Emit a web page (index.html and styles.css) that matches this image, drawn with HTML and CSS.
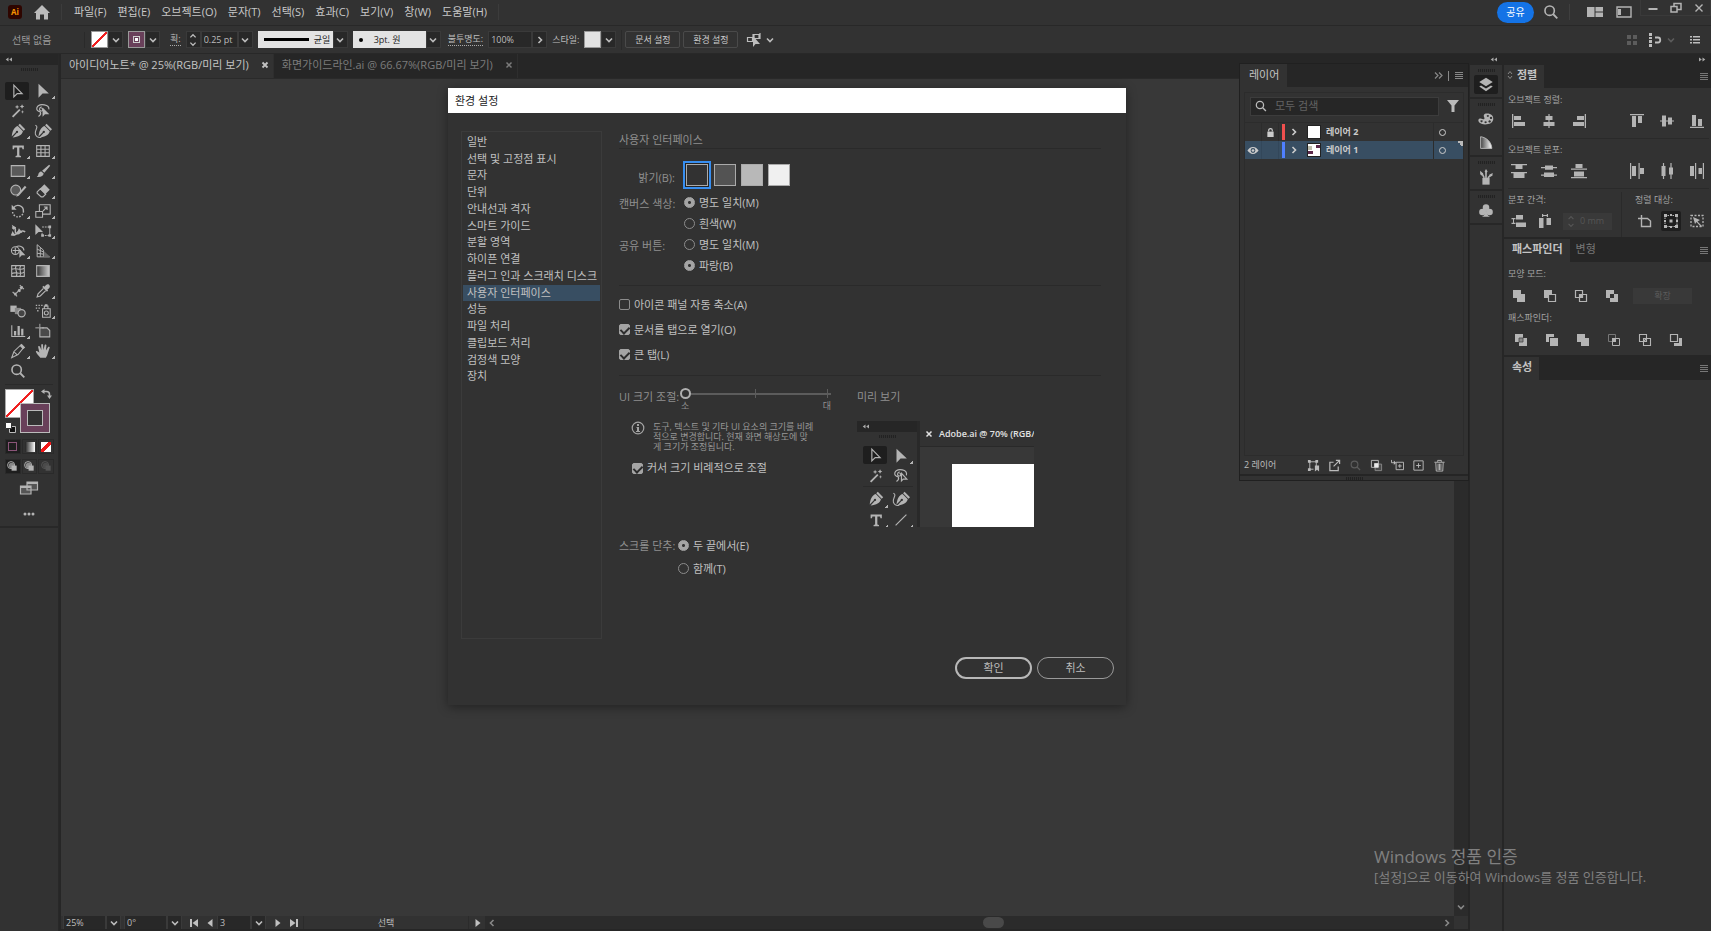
FILE: index.html
```html
<!DOCTYPE html>
<html lang="ko">
<head>
<meta charset="utf-8">
<title>환경 설정</title>
<link rel="stylesheet" href="styles.css">
</head>
<body>
<svg class="sprite" aria-hidden="true">
  <defs>
    <linearGradient id="g1"><stop offset="0" stop-color="#333"/><stop offset="1" stop-color="#ccc"/></linearGradient>
    <linearGradient id="g2"><stop offset="0" stop-color="#222"/><stop offset="1" stop-color="#fff"/></linearGradient>
    <linearGradient id="g3"><stop offset="0" stop-color="#444"/><stop offset="1" stop-color="#fff"/></linearGradient>
  </defs>
  <symbol id="chev" viewBox="0 0 10 10"><path class="ln" stroke-width="1.6" d="M2 3.5l3 3 3-3"/></symbol>
  <symbol id="chevr" viewBox="0 0 10 10"><path class="ln" stroke-width="1.6" d="M3.5 2l3 3-3 3"/></symbol>
  <symbol id="spin" viewBox="0 0 10 16"><path class="ln" stroke-width="1.5" d="M2 5l3-3 3 3M2 11l3 3 3-3"/></symbol>
  <symbol id="home" viewBox="0 0 18 18"><path d="M9 2l8 8h-2v6.500h-4V11.500H7v5H3V10H1z"/></symbol>
  <symbol id="search" viewBox="0 0 20 20"><circle class="ln" cx="8.500" cy="8.500" r="5.200" stroke-width="1.800"/><path class="ln" stroke-width="2" d="M12.500 12.500l4.500 4.500"/></symbol>
  <symbol id="ham" viewBox="0 0 10 10"><path class="ln" d="M1 1.500h8M1 3.500h8M1 5.500h8M1 7.500h8"/></symbol>
  <symbol id="dl" viewBox="0 0 10 6"><path d="M5 0v6L1 3zM10 0v6L6 3z"/></symbol>
  <symbol id="dr" viewBox="0 0 10 6"><path d="M0 0v6l4-3zM5 0v6l4-3z"/></symbol>
  <symbol id="arrow-o" viewBox="0 0 20 20"><path class="ln" stroke-width="1.300" d="M6.500 3.500v13l3.700-3.500h5.500z"/></symbol>
  <symbol id="arrow-f" viewBox="0 0 20 20"><path d="M5 2v15.500l4.500-4.700h7z"/></symbol>
  <symbol id="wand" viewBox="0 0 20 20"><path class="ln" stroke-width="2" d="M4 16.500l8-8"/><path d="M9 3l.7 1.800L11.500 5.500l-1.800.7L9 8l-.7-1.800L6.500 5.500l1.800-.7zM14.500 2.500l.8 1.700 1.700.8-1.700.8-.8 1.700-.8-1.700L12 5l1.700-.8zM15 9l.5 1.500 1.500.5-1.500.5L15 13l-.5-1.500L13 11l1.500-.5z"/></symbol>
  <symbol id="lasso" viewBox="0 0 20 20"><path class="ln" stroke-width="1.300" d="M7 11c-3-.5-4.500-2.500-3.800-4.600C4.200 3.500 8 2.600 11.500 3.200c3.500.6 5.300 2.800 5 5M8.500 5.500C5.500 6 5.500 10 8 10s2-3 .3-3M7 11c1 2-.5 4-2 5"/><path d="M9.500 6v10.500l2.700-2.800H17z"/></symbol>
  <symbol id="lasso-o" viewBox="0 0 20 20"><path class="ln" stroke-width="1.300" d="M7 11c-3-.5-4.500-2.500-3.800-4.600C4.200 3.500 8 2.600 11.500 3.200c3.500.6 5.300 2.800 4.500 6M8.500 5.500C5.500 6 5.500 10 8 10s2-3 .3-3M7 11c1 2-.5 4-2 5M10.500 7v8.500l2-2h4z"/></symbol>
  <symbol id="pen" viewBox="0 0 20 20"><path d="M12 2l6 6-1.700 1.700-6-6zM9.700 4.500l5.800 5.800c-1 4.200-5 6-11.500 7l4.600-5a1.300 1.300 0 1 0-1-1L3 16C3.800 10 5.500 6 9.700 4.500z"/></symbol>
  <symbol id="curve" viewBox="0 0 20 20"><g transform="translate(2 0)"><path d="M12 2l6 6-1.700 1.700-6-6zM9.700 4.500l5.800 5.800c-1 4.200-5 6-11.500 7l4.600-5a1.300 1.300 0 1 0-1-1L3 16C3.800 10 5.500 6 9.700 4.500z"/></g><path class="ln" stroke-width="1.200" d="M1.500 3.500C6 5 0 10 1.500 13.500 2.500 16.500 5 17.500 8 17"/></symbol>
  <symbol id="type" viewBox="0 0 20 20"><path d="M4 4h12.500v4H15l-.5-2h-3v9l1.800.5V17h-6v-1.500L9 15V6H6l-.5 2H4z"/></symbol>
  <symbol id="gridt" viewBox="0 0 20 20"><path class="ln" stroke-width="1.200" d="M3 4h14v12H3zM3 8h14M3 12h14M7.700 4v12M12.300 4v12"/></symbol>
  <symbol id="rect" viewBox="0 0 20 20"><path fill="#5a5a5a" stroke="currentColor" stroke-width="1.200" d="M2.500 4h15v12h-15z"/></symbol>
  <symbol id="brush" viewBox="0 0 20 20"><path d="M16.800 3L18 4.200 11.500 12 9 9.700zM8.200 10.500l2.500 2.300C10.500 15.500 7 17.500 3 16.500c2-1 1.500-2.500 2.200-4 .7-1.300 2-2 3-2z"/></symbol>
  <symbol id="shaper" viewBox="0 0 20 20"><circle cx="7.500" cy="9" r="5.500" fill="#5a5a5a" stroke="currentColor" stroke-width="1.200"/><path class="ln" stroke-width="2.300" d="M18.500 5l-8 9"/><path d="M9.500 13l2 2-3.500 1.500z"/></symbol>
  <symbol id="eraser" viewBox="0 0 20 20"><path d="M11.500 2.500l6 6-5 5-6-6z"/><path class="ln" stroke-width="1.300" d="M7 7.500l6 6-3 3H8L3.500 12.500V11z"/></symbol>
  <symbol id="rotate" viewBox="0 0 20 20"><path class="ln" stroke-width="1.600" d="M5 6.500A6 6 0 0 1 16 10"/><path class="ln" stroke-width="1.600" stroke-dasharray="1.800 1.500" d="M16 10a6 6 0 0 1-12 1"/><path d="M3 3v5.500h5.500z"/></symbol>
  <symbol id="scale" viewBox="0 0 20 20"><path class="ln" stroke-width="1.200" d="M2 10.500h7.500v6.500H2zM6 10V3h12v10.500H10M10 10l4.500-4.500M11 5.500h3.500V9"/></symbol>
  <symbol id="width" viewBox="0 0 20 20"><path class="ln" stroke-width="1.700" d="M3.500 7c3-2 4 0 3.500 3s3 4 5 2 3-3 6-1M3 14c3 1 6-1 8-4"/><path d="M3 3l5 3-3 3zM11 7l4 5h-6zM4 10l3 5H2z"/></symbol>
  <symbol id="free" viewBox="0 0 20 20"><path d="M1.500 2.500v12l3.500-3.500h5z"/><path class="ln" stroke-width="1.200" stroke-dasharray="2 1" d="M9 5.500h9M9 15h9"/><path class="ln" d="M9 12v3M17.500 5v10"/><path d="M16 4h3v3h-3zM16 13.500h3v3h-3zM8 13.500h3v3H8z"/></symbol>
  <symbol id="builder" viewBox="0 0 20 20"><circle class="ln" cx="7" cy="9.500" r="4.300" stroke-width="1.200"/><path class="ln" stroke-width="1.200" d="M8 5.300a5.500 4.500 0 0 1 8.500 4.200M4 9.500h9M7 6v7"/><path d="M11.500 7.500v10l2.700-2.700h4z"/></symbol>
  <symbol id="persp" viewBox="0 0 20 20"><path class="ln" stroke-width="1.100" d="M3.500 3v13.500h14M3.500 3l7 6v7M3.500 8l7 3M3.500 12.500l7 1M7 6v10.500"/><path fill="#666" d="M11 10l7 6.500h-7z"/></symbol>
  <symbol id="mesh" viewBox="0 0 20 20"><path class="ln" stroke-width="1.200" d="M3 4h14v12H3zM3 8c5-2 9 2 14-1M3 13c4-3 10 2 14-2M8 4c-3 4 3 8 0 12M13 4c-3 4 2 8-1 12"/></symbol>
  <symbol id="grad" viewBox="0 0 20 20"><path fill="url(#g1)" stroke="currentColor" stroke-width="1.200" d="M3 4h14v12H3z"/></symbol>
  <symbol id="measure" viewBox="0 0 20 20"><path class="ln" stroke-width="1.300" d="M4 11l5 5M12 3.500l4.500 4.500M7 13.500L14.500 6"/><path d="M5.500 15l1-4 2.500 2.800zM15.500 4.500l-1 4-3-2.800zM11 7.500l2.500 2.500-2 1.500-2-2z"/></symbol>
  <symbol id="drop" viewBox="0 0 20 20"><path d="M13.500 3.300c2.300-2 5.500.7 3.500 3.300L14.800 8.500l.9.900-1.300 1.300-5.200-5.100 1.300-1.300.9.900z"/><path class="ln" stroke-width="1.300" d="M10.500 7l-6 6.200L3.500 16.500l3.500-1 6-6"/></symbol>
  <symbol id="blend" viewBox="0 0 20 20"><path d="M1.500 4h7v7h-7z"/><path fill="#888" d="M6.500 6.500h7v7h-7z"/><circle cx="14" cy="12.500" r="4" fill="#444" stroke="currentColor" stroke-width="1.300"/></symbol>
  <symbol id="spray" viewBox="0 0 20 20"><path class="ln" stroke-width="1.200" d="M9.500 7.500h8.500v9.500H9.500zM11.500 7V4.500h4V7"/><circle class="ln" cx="13.700" cy="12.200" r="2.200" stroke-width="1.200"/><path d="M2 3h1.500v1.500H2zM5 3h1.500v1.500H5zM8 3h1.500v1.500H8zM2 6h1.500v1.500H2zM5 6h1.500v1.500H5zM3.500 9H5v1.500H3.500zM12 2.500h3V5h-3z"/></symbol>
  <symbol id="graph" viewBox="0 0 20 20"><path d="M2.500 3.500h1.200V15.500H18v1.200H2.500zM5.500 10h2.500v5H5.500zM9.500 4.500h2.500v10.500H9.500zM13.500 7.500H16V15h-2.500z"/></symbol>
  <symbol id="artb" viewBox="0 0 20 20"><path fill="#4a4a4a" stroke="currentColor" stroke-width="1.200" d="M6.500 6.500h8l3 3v7h-11z"/><path class="ln" d="M1.500 6.500h4.500M6.500 2v4M9 6.500h2"/></symbol>
  <symbol id="slice" viewBox="0 0 20 20"><path class="ln" stroke-width="1.200" d="M3 17.500l2.500-7L13.500 3l3 3-6.500 8zM5.500 11l4 3.500"/><path d="M12 4.500L14 2l4 4-2.500 2z"/></symbol>
  <symbol id="hand" viewBox="0 0 20 20"><path d="M7 17.500c-1.500-2-4.500-5-5-7 1-1 2.500 0 4 1.500L4.500 5c.6-1 1.900-.6 2.200.3L8.200 9 8 3c.4-1 1.700-1 2 0L10.500 9l1.400-5.700c.5-.8 1.900-.5 1.900.6L13.300 9.500l2.400-4c.8-.6 2 0 1.700 1L15.500 12c-.5 2-1.200 4-2.300 5.500z"/></symbol>
  <symbol id="swap" viewBox="0 0 12 12"><path class="ln" stroke-width="1.500" d="M3 3.500h2.500c2 0 3 1 3 3V8"/><path d="M0 3.500L3.500 1v5zM6 7.500h5L8.500 11z"/></symbol>
  <symbol id="screen" viewBox="0 0 20 16"><path fill="#555" stroke="currentColor" stroke-width="1.200" d="M8 2h10.500v8H8zM1.500 6H12v8H1.500z"/><path d="M8 2h10.500v2H8zM1.500 6H12v2H1.500z"/></symbol>
  <symbol id="dm" viewBox="0 0 14 14"><circle class="ln" cx="5.500" cy="5.500" r="3.800"/><path d="M6 6h5.500v5.500H6z"/><circle cx="6" cy="6" r="3" opacity=".7"/></symbol>
  <symbol id="layers" viewBox="0 0 20 20"><path d="M10 2l7.500 4.800L10 11.500 2.500 6.800zM4.500 10.500L10 14l5.500-3.500 2 1.300L10 17l-7.500-5.200z"/></symbol>
  <symbol id="palette" viewBox="0 0 20 20"><path fill-rule="evenodd" d="M11 4c5 0 7.500 3 7 6.500S14 16 9 16s-7.500-2-7.500-4.500 3-2.500 4.500-1.500 3 0 2-2S7.500 4 11 4zm1 1.500a1.300 1 0 1 0 .1 0zM15.500 7.500a1.300 1.200 0 1 0 .1 0zM14 11.500a1.400 1.200 0 1 0 .1 0zM9.500 12.500a1.400 1 0 1 0 .1 0zM5 11.500a1.200 1 0 1 0 .1 0z"/></symbol>
  <symbol id="cguide" viewBox="0 0 20 20"><path fill="url(#g3)" stroke="#bbb" d="M4 3c7 1 12 6 12.500 13H4z"/></symbol>
  <symbol id="brushes" viewBox="0 0 20 20"><path d="M6 11h8v7.500H6z"/><path class="ln" stroke-width="1.800" d="M8 11L5.500 6M10 11V5M12 11l3.500-3"/><path d="M3.500 3l3.500 3-1.500 2.500L3.500 7zM10 1l1.800 3-1.800 2.500L8.500 4zM17.500 5.500L17 9l-3 .5-.5-2z"/></symbol>
  <symbol id="club" viewBox="0 0 20 20"><circle cx="10" cy="6" r="3.600"/><circle cx="6" cy="11" r="3.600"/><circle cx="14" cy="11" r="3.600"/><path d="M9 9h2c0 4 .5 6 3.500 7.500h-9C8.500 15 9 13 9 9z"/></symbol>
  <symbol id="eye" viewBox="0 0 14 10"><path fill-rule="evenodd" d="M7 1c3 0 5 2 6.500 4C12 7 10 9 7 9S2 7 .5 5C2 3 4 1 7 1zm0 1.200A2.800 2.800 0 1 0 7 7.800 2.800 2.800 0 0 0 7 2.200z"/><circle cx="7" cy="5" r="1.600"/></symbol>
  <symbol id="lock" viewBox="0 0 10 12"><path d="M1.500 5h7v6h-7z"/><path class="ln" stroke-width="1.300" d="M3 5V3.500c0-2.500 4-2.500 4 0V5"/></symbol>
  <symbol id="filter" viewBox="0 0 12 12"><path d="M0 0h12L7.500 5.500V12h-3V5.500z"/></symbol>
  <!-- align -->
  <symbol id="al1" viewBox="0 0 16 16"><path d="M1 1h1.300v14H1zM3 3h7v4H3zM3 9h11v4H3z"/></symbol>
  <symbol id="al2" viewBox="0 0 16 16"><path d="M7.400 1h1.200v14H7.400zM4.500 3h7v4h-7zM2.500 9h11v4h-11z"/></symbol>
  <symbol id="al3" viewBox="0 0 16 16"><path d="M13.700 1H15v14h-1.300zM6 3h7v4H6zM2 9h11v4H2z"/></symbol>
  <symbol id="al4" viewBox="0 0 16 16"><path d="M1 1h14v1.300H1zM3 3h4v11H3zM9 3h4v7H9z"/></symbol>
  <symbol id="al5" viewBox="0 0 16 16"><path d="M1 7.400h14v1.200H1zM3 2.500h4v11H3zM9 4.500h4v7H9z"/></symbol>
  <symbol id="al6" viewBox="0 0 16 16"><path d="M1 13.700h14V15H1zM3 2h4v11H3zM9 6h4v7H9z"/></symbol>
  <symbol id="ds1" viewBox="0 0 16 16"><path d="M0 1h16v1.200H0zM4.500 2h7v4h-7zM0 9h16v1.200H0zM2.500 10h11v5h-11z"/></symbol>
  <symbol id="ds2" viewBox="0 0 16 16"><path d="M0 4h16v1.200H0zM4 2.500h8v4.200H4zM0 11.500h16v1.200H0zM3 9.500h10v4.500H3z"/></symbol>
  <symbol id="ds3" viewBox="0 0 16 16"><path d="M0 5.500h16v1.200H0zM4.500 1h7v4h-7zM3 8.500h10v5H3zM0 14h16v1.200H0z"/></symbol>
  <symbol id="ds4" viewBox="0 0 16 16"><path d="M1 0h1.200v16H1zM3 3h4v10H3zM9.500 0h1.200v16H9.500zM11 5h4v6h-4z"/></symbol>
  <symbol id="ds5" viewBox="0 0 16 16"><path d="M3.900 0h1.200v16H3.900zM2.500 3h4v10h-4zM11.400 0h1.200v16h-1.200zM10 4.500h4v7h-4z"/></symbol>
  <symbol id="ds6" viewBox="0 0 16 16"><path d="M1 3h4v10H1zM6 0h1.200v16H6zM9.500 5h3.500v6H9.500zM13.800 0H15v16h-1.200z"/></symbol>
  <symbol id="sp1" viewBox="0 0 16 16"><path d="M5 2h7v4.500H5zM5 9.500h10V14H5zM.5 5h4v1.200h-4zM.5 9.800h4V11h-4zM2 6h1v4H2z"/></symbol>
  <symbol id="sp2" viewBox="0 0 16 16"><path d="M2 5h4.500v10H2zM9.500 5H14v7H9.500zM5 1h1.200v3H5zM9.800 1H11v3H9.800zM6 2h4v1H6z"/></symbol>
  <symbol id="at1" viewBox="0 0 16 16"><path class="ln" stroke-width="1.400" d="M4.500 5.500h6L13.500 8v5.500h-9zM1 5.500h3M4.500 2v3"/></symbol>
  <symbol id="at2" viewBox="0 0 16 16"><path class="ln" stroke-width="1.100" stroke-dasharray="1.500 1" d="M2 2.500h12v11H2z"/><path d="M1 1h3v3H1zM12 1h3v3h-3zM1 12h3v3H1zM12 12h3v3h-3zM6.500 6.500h3v3h-3zM7 1h2v2H7zM7 13h2v2H7zM1 7h2v2H1zM13 7h2v2h-2z"/></symbol>
  <symbol id="at3" viewBox="0 0 16 16"><path class="ln" stroke-width="1.300" stroke-dasharray="2 1.500" d="M2 2.500h12v11H2z"/><path d="M4 4l7 3-2.500 1.500L13 13l-1 1-4.500-5L6 11z"/></symbol>
  <!-- pathfinder -->
  <symbol id="pf1" viewBox="0 0 14 14"><path d="M1 1h8v4h4v8H5V9H1z"/></symbol>
  <symbol id="pf2" viewBox="0 0 14 14"><path d="M1 1h8v4H5v4H1z"/><path class="ln" stroke-width="1.200" d="M5.500 5.500h7v7h-7z"/></symbol>
  <symbol id="pf3" viewBox="0 0 14 14"><path class="ln" stroke-width="1.200" d="M1.500 1.500h7v7h-7zM5.500 5.500h7v7h-7z"/><path d="M5 5h4v4H5z"/></symbol>
  <symbol id="pf4" viewBox="0 0 14 14"><path fill-rule="evenodd" d="M1 1h8v4h4v8H5V9H1zM5 5v4h4V5z"/></symbol>
  <symbol id="pf5" viewBox="0 0 14 14"><path d="M1 1h8v8H1z"/><path d="M5 5h8v8H5z"/><path fill="#888" stroke="#444" stroke-width=".8" d="M5 5h4v4H5z"/></symbol>
  <symbol id="pf6" viewBox="0 0 14 14"><path d="M1 1h8v3H4v5H1z"/><path d="M5 5h8v8H5z"/></symbol>
  <symbol id="pf7" viewBox="0 0 14 14"><path fill="none" stroke="#777" d="M1.500 1.500h7v7h-7z"/><path class="ln" d="M9 5.500h3.500v7h-7V9"/><path d="M5 5h4v4H5z"/></symbol>
  <symbol id="pf8" viewBox="0 0 14 14"><path class="ln" stroke-width="1.100" d="M1.500 1.500h7v7h-7zM5.500 5.500h7v7h-7zM5.500 8.500l3-3"/></symbol>
  <symbol id="pf9" viewBox="0 0 14 14"><path d="M10 5h3v8H5v-3h5z"/><path class="ln" stroke-width="1.200" d="M1.500 1.500h7v7h-7z"/></symbol>
  <!-- layer footer -->
  <symbol id="lf1" viewBox="0 0 14 14"><path class="ln" d="M3 3h7v5M3 3v8h4"/><path d="M1 1h3v3H1zM9 1h3v3H9zM1 10h3v3H1zM8.500 7H13v6.500l-2.200-2-2.300 2z"/></symbol>
  <symbol id="lf2" viewBox="0 0 14 14"><path class="ln" stroke-width="1.300" d="M6 3.500H2v9h9V8M6 8l6-6M8.500 1.500h4v4"/></symbol>
  <symbol id="lf4" viewBox="0 0 14 14"><path fill="#4a4a4a" stroke="#888" d="M5.500 5.500h7v7h-7z"/><path class="ln" d="M1.500 1.500h7.500v7.500H1.500z"/><path fill="#e8e8e8" d="M4.500 4.500H9V9H4.500z"/></symbol>
  <symbol id="lf5" viewBox="0 0 14 14"><path class="ln" d="M5.500 3.500h8v8h-8zM9.500 5.500v4M7.500 7.500h4M.5 1v3h3"/><path d="M3 1.500v5L5.500 4z"/></symbol>
  <symbol id="lf6" viewBox="0 0 14 14"><path class="ln" d="M2 2h10v10H2zM7 4.500v5M4.500 7h5"/></symbol>
  <symbol id="lf7" viewBox="0 0 14 14"><path class="ln" d="M1.500 3.500h11M5 3V1.500h4V3M3 4l.5 9h7l.5-9M5.500 5v7M7 5v7M8.500 5v7"/></symbol>
</svg>

<div class="app">
  <header class="menubar">
    <span class="logo">Ai</span>
    <button class="plain home" aria-label="홈"><svg class="i18"><use href="#home"/></svg></button>
    <nav class="menus">
      <button class="plain">파일(F)</button><button class="plain">편집(E)</button><button class="plain">오브젝트(O)</button><button class="plain">문자(T)</button><button class="plain">선택(S)</button><button class="plain">효과(C)</button><button class="plain">보기(V)</button><button class="plain">창(W)</button><button class="plain">도움말(H)</button>
    </nav>
    <div class="menu-right">
      <button class="share">공유</button>
      <button class="plain find" aria-label="검색"><svg class="i18"><use href="#search"/></svg></button>
      <span class="vsep"></span>
      <button class="plain ws" aria-label="작업 영역"><svg width="16" height="12" viewBox="0 0 16 12"><path d="M0 1h7.500v10H0zM8.500 1H16v4.500H8.500zM8.500 6.500H16V11H8.500z"/></svg></button>
      <button class="plain arrange" aria-label="화면"><svg width="16" height="12" viewBox="0 0 16 12"><path class="ln" stroke-width="1.400" d="M1 1h14v10H1z"/><path d="M2 3h3v6H2z"/></svg></button>
      <div class="winctl">
        <button class="plain" aria-label="최소화"><svg width="12" height="12" viewBox="0 0 12 12"><path d="M1.500 6h9v2h-9z"/></svg></button>
        <button class="plain" aria-label="이전 크기로"><svg width="14" height="12" viewBox="0 0 14 12"><path class="ln" stroke-width="1.500" d="M2 4.500h6v5.500H2zM5 4V1.500h7v6H8.500"/></svg></button>
        <button class="plain" aria-label="닫기"><svg width="12" height="12" viewBox="0 0 12 12"><path class="ln" stroke-width="1.400" d="M2.500 2.500l7 7M9.500 2.500l-7 7"/></svg></button>
      </div>
    </div>
  </header>

  <div class="control">
    <span class="sel-state">선택 없음</span>
    <div class="combo c-fill"><span class="sw none"></span><button aria-label="칠"><svg class="i10"><use href="#chev"/></svg></button></div>
    <div class="combo"><span class="sw plum"><i></i></span><button aria-label="선 색상"><svg class="i10"><use href="#chev"/></svg></button></div>
    <label class="dotted" for="stroke-w">획:</label>
    <div class="combo c-weight"><button class="spinb" aria-label="단계"><svg width="10" height="14"><use href="#spin"/></svg></button><input id="stroke-w" type="text" value="0.25 pt"><button aria-label="두께"><svg class="i10"><use href="#chev"/></svg></button></div>
    <div class="combo c-profile"><span class="white"><i class="bar"></i>균일</span><button aria-label="폭 프로파일"><svg class="i10"><use href="#chev"/></svg></button></div>
    <div class="combo c-brush"><span class="white"><i class="dot"></i>3pt. 원</span><button aria-label="브러쉬"><svg class="i10"><use href="#chev"/></svg></button></div>
    <label class="dotted near" for="opac">불투명도:</label>
    <div class="combo c-opac"><input id="opac" type="text" value="100%"><button aria-label="불투명도"><svg class="i10"><use href="#chevr"/></svg></button></div>
    <span class="lbl">스타일:</span>
    <div class="combo c-style"><span class="sw light"></span><button aria-label="스타일"><svg class="i10"><use href="#chev"/></svg></button></div>
    <span class="vsep"></span>
    <button class="boxbtn">문서 설정</button>
    <button class="boxbtn">환경 설정</button>
    <button class="plain similar" aria-label="유사 선택"><svg width="16" height="14" viewBox="0 0 16 14"><path class="ln" stroke-width="1.200" d="M1.500 4.500h5v4h-5zM8 1.500h5v4H8zM7 1v5M14 0v6"/><path d="M7 3v11l2.500-3H14z"/></svg><svg class="i10"><use href="#chev"/></svg></button>
    <div class="control-right">
      <svg class="dim" width="10" height="12" viewBox="0 0 10 12"><path d="M0 1h4v4H0zM6 1h4v4H6zM0 7h4v4H0zM6 7h4v4H6z"/></svg>
      <svg width="14" height="14" viewBox="0 0 14 14"><path d="M1 0h3v3H1zM1 4h3v2H1zM1 7h3v3H1zM1 11h3v3H1z"/><path class="ln" stroke-width="1.800" d="M7 4.500h3c3 0 3 5 0 5H7"/></svg>
      <svg class="i10 dim"><use href="#chev"/></svg>
      <button class="plain list" aria-label="메뉴"><svg width="10" height="10" viewBox="0 0 10 10"><path d="M0 1h2v1.500H0zM3 1h7v1.500H3zM0 4h2v1.500H0zM3 4h7v1.500H3zM0 7h2v1.500H0zM3 7h7v1.500H3z"/></svg></button>
    </div>
  </div>

  <main class="work">
    <aside class="tools">
      <div class="strip"><svg width="7" height="5"><use href="#dl"/></svg></div>
      <div class="grip"></div>
      <div class="toolgrid">
        <button class="on" aria-label="선택"><svg><use href="#arrow-o"/></svg></button><button class="more" aria-label="직접 선택"><svg><use href="#arrow-f"/></svg></button>
        <button aria-label="마술봉"><svg><use href="#wand"/></svg></button><button aria-label="올가미"><svg><use href="#lasso"/></svg></button>
        <button class="more" aria-label="펜"><svg><use href="#pen"/></svg></button><button aria-label="곡률"><svg><use href="#curve"/></svg></button>
        <button class="more" aria-label="문자"><svg><use href="#type"/></svg></button><button class="more" aria-label="격자"><svg><use href="#gridt"/></svg></button>
        <button class="more" aria-label="사각형"><svg><use href="#rect"/></svg></button><button class="more" aria-label="브러쉬"><svg><use href="#brush"/></svg></button>
        <button class="more" aria-label="Shaper"><svg><use href="#shaper"/></svg></button><button class="more" aria-label="지우개"><svg><use href="#eraser"/></svg></button>
        <button class="more" aria-label="회전"><svg><use href="#rotate"/></svg></button><button class="more" aria-label="크기"><svg><use href="#scale"/></svg></button>
        <button class="more" aria-label="폭"><svg><use href="#width"/></svg></button><button class="more" aria-label="자유 변형"><svg><use href="#free"/></svg></button>
        <button class="more" aria-label="도형 구성"><svg><use href="#builder"/></svg></button><button class="more" aria-label="원근감"><svg><use href="#persp"/></svg></button>
        <button aria-label="망"><svg><use href="#mesh"/></svg></button><button aria-label="그레이디언트"><svg><use href="#grad"/></svg></button>
        <button aria-label="치수"><svg><use href="#measure"/></svg></button><button class="more" aria-label="스포이드"><svg><use href="#drop"/></svg></button>
        <button aria-label="블렌드"><svg><use href="#blend"/></svg></button><button class="more" aria-label="심볼 분무기"><svg><use href="#spray"/></svg></button>
        <button class="more" aria-label="그래프"><svg><use href="#graph"/></svg></button><button aria-label="대지"><svg><use href="#artb"/></svg></button>
        <button class="more" aria-label="분할"><svg><use href="#slice"/></svg></button><button class="more" aria-label="손"><svg><use href="#hand"/></svg></button>
        <button aria-label="돋보기"><svg><use href="#search"/></svg></button>
      </div>
      <div class="fillstroke">
        <span class="fs-fill"></span><span class="fs-stroke"></span>
        <svg class="fs-swap" width="12" height="12"><use href="#swap"/></svg>
        <svg class="fs-def" width="11" height="11" viewBox="0 0 11 11"><path fill="#111" stroke="#bbb" d="M4.500 4.500h6v6h-6z"/><path fill="#fff" stroke="#333" d="M.5.500h6v6h-6z"/></svg>
      </div>
      <div class="modes">
        <button class="on" aria-label="색상"><i class="m-color"></i></button><button aria-label="그레이디언트"><svg width="10" height="10"><rect width="10" height="10" fill="url(#g2)"/></svg></button><button aria-label="없음"><i class="m-none"></i></button>
      </div>
      <div class="modes draw">
        <button class="on" aria-label="표준 그리기"><svg width="13" height="13"><use href="#dm"/></svg></button><button aria-label="배경 그리기"><svg width="13" height="13"><use href="#dm"/></svg></button><button class="off" aria-label="내부 그리기"><svg width="13" height="13"><use href="#dm"/></svg></button>
      </div>
      <button class="plain screenb" aria-label="화면 모드"><svg width="20" height="16"><use href="#screen"/></svg></button>
      <button class="plain dots" aria-label="도구 모음 편집"><svg width="12" height="4" viewBox="0 0 12 4"><circle cx="2" cy="2" r="1.500"/><circle cx="6" cy="2" r="1.500"/><circle cx="10" cy="2" r="1.500"/></svg></button>
      <div class="tools-end"></div>
    </aside>

    <section class="doc">
      <div class="tabs">
        <div class="tab active"><span>아이디어노트* @ 25%(RGB/미리 보기)</span><button class="plain" aria-label="탭 닫기"><svg class="x" viewBox="0 0 8 8"><path class="ln" stroke-width="1.800" d="M1.500 1.500l5 5M6.500 1.500l-5 5"/></svg></button></div>
        <div class="tab"><span>화면가이드라인.ai @ 66.67%(RGB/미리 보기)</span><button class="plain" aria-label="탭 닫기"><svg class="x" viewBox="0 0 8 8"><path class="ln" stroke-width="1.500" d="M1.500 1.500l5 5M6.500 1.500l-5 5"/></svg></button></div>
      </div>
      <div class="canvas"><div class="vscroll"><svg class="i10"><use href="#chev"/></svg></div></div>
      <footer class="status">
        <div class="combo s-zoom"><input type="text" aria-label="확대" value="25%"><button aria-label="확대 목록"><svg class="i10"><use href="#chev"/></svg></button></div>
        <div class="combo s-zoom"><input type="text" aria-label="회전" value="0°"><button aria-label="회전 목록"><svg class="i10"><use href="#chev"/></svg></button></div>
        <button class="plain nav" aria-label="처음"><svg width="8" height="8" viewBox="0 0 8 8"><path d="M0 0h2v8H0zM8 0v8L2.500 4z"/></svg></button>
        <button class="plain nav" aria-label="이전"><svg width="8" height="8" viewBox="0 0 8 8"><path d="M6.500 0v8L1.500 4z"/></svg></button>
        <div class="combo s-page"><input type="text" aria-label="대지" value="3"><button aria-label="대지 목록"><svg class="i10"><use href="#chev"/></svg></button></div>
        <button class="plain nav" aria-label="다음"><svg width="8" height="8" viewBox="0 0 8 8"><path d="M1.500 0v8l5-4z"/></svg></button>
        <button class="plain nav" aria-label="마지막"><svg width="8" height="8" viewBox="0 0 8 8"><path d="M6 0h2v8H6zM0 0v8l5.500-4z"/></svg></button>
        <span class="s-tool">선택</span>
        <button class="plain nav" aria-label="상태 메뉴"><svg width="8" height="8" viewBox="0 0 8 8"><path d="M1.500 0v8l5-4z"/></svg></button>
        <div class="hscroll"><svg class="i10 flip"><use href="#chevr"/></svg><span class="thumb"></span><svg class="i10"><use href="#chevr"/></svg></div>
        <span class="corner"></span>
      </footer>
    </section>

    <aside class="dock">
      <div class="strip end"><svg width="7" height="5"><use href="#dl"/></svg></div>
      <div class="dgroup"><div class="grip"></div><button class="on" aria-label="레이어"><svg><use href="#layers"/></svg></button></div>
      <div class="dgroup"><div class="grip"></div><button aria-label="색상"><svg><use href="#palette"/></svg></button><button aria-label="색상 안내"><svg><use href="#cguide"/></svg></button></div>
      <div class="dgroup"><div class="grip"></div><button aria-label="브러쉬"><svg><use href="#brushes"/></svg></button></div>
      <div class="dgroup"><div class="grip"></div><button aria-label="심볼"><svg><use href="#club"/></svg></button></div>
    </aside>

    <aside class="panels">
      <div class="strip end"><svg width="7" height="5"><use href="#dr"/></svg></div>
      <section class="panel">
        <div class="ptabs"><h2 class="ptab"><svg class="updown" width="6" height="10" viewBox="0 0 6 10"><path class="ln" d="M1 4l2-2.500L5 4M1 6l2 2.500L5 6"/></svg>정렬</h2><button class="plain pmenu" aria-label="패널 메뉴"><svg class="i10"><use href="#ham"/></svg></button></div>
        <div class="pbody">
          <h3>오브젝트 정렬:</h3>
          <div class="irow six"><button aria-label="왼쪽 정렬"><svg><use href="#al1"/></svg></button><button aria-label="가운데 정렬"><svg><use href="#al2"/></svg></button><button aria-label="오른쪽 정렬"><svg><use href="#al3"/></svg></button><button class="skip" aria-label="위쪽 정렬"><svg><use href="#al4"/></svg></button><button aria-label="중간 정렬"><svg><use href="#al5"/></svg></button><button aria-label="아래쪽 정렬"><svg><use href="#al6"/></svg></button></div>
          <hr>
          <h3>오브젝트 분포:</h3>
          <div class="irow six"><button aria-label="위쪽 분포"><svg><use href="#ds1"/></svg></button><button aria-label="중간 분포"><svg><use href="#ds2"/></svg></button><button aria-label="아래쪽 분포"><svg><use href="#ds3"/></svg></button><button class="skip" aria-label="왼쪽 분포"><svg><use href="#ds4"/></svg></button><button aria-label="가운데 분포"><svg><use href="#ds5"/></svg></button><button aria-label="오른쪽 분포"><svg><use href="#ds6"/></svg></button></div>
          <hr>
          <div class="split">
            <div class="half"><h3>분포 간격:</h3>
              <div class="irow"><button aria-label="세로 간격"><svg><use href="#sp1"/></svg></button><button aria-label="가로 간격"><svg><use href="#sp2"/></svg></button><span class="mm"><svg><use href="#spin"/></svg><input type="text" value="0 mm" aria-label="간격" disabled></span></div></div>
            <div class="half to"><h3>정렬 대상:</h3>
              <div class="irow"><button aria-label="대지에 정렬"><svg><use href="#at1"/></svg></button><button class="on" aria-label="선택에 정렬"><svg><use href="#at2"/></svg></button><button aria-label="주요 오브젝트에 정렬"><svg><use href="#at3"/></svg></button></div></div>
          </div>
        </div>
      </section>
      <section class="panel pf">
        <div class="ptabs"><h2 class="ptab">패스파인더</h2><h2 class="ptab off">변형</h2><button class="plain pmenu" aria-label="패널 메뉴"><svg class="i10"><use href="#ham"/></svg></button></div>
        <div class="pbody">
          <h3>모양 모드:</h3>
          <div class="irow pfrow"><button aria-label="합치기"><svg><use href="#pf1"/></svg></button><button aria-label="앞면 오브젝트 제외"><svg><use href="#pf2"/></svg></button><button aria-label="교차 영역"><svg><use href="#pf3"/></svg></button><button aria-label="교차 영역 제외"><svg><use href="#pf4"/></svg></button><button class="expand" disabled>확장</button></div>
          <h3>패스파인더:</h3>
          <div class="irow pfrow second"><button aria-label="나누기"><svg><use href="#pf5"/></svg></button><button aria-label="동색 오브젝트 분리"><svg><use href="#pf6"/></svg></button><button aria-label="병합"><svg><use href="#pf1"/></svg></button><button aria-label="자르기"><svg><use href="#pf7"/></svg></button><button aria-label="윤곽선"><svg><use href="#pf8"/></svg></button><button aria-label="이면 오브젝트 제외"><svg><use href="#pf9"/></svg></button></div>
        </div>
      </section>
      <section class="panel rest">
        <div class="ptabs"><h2 class="ptab">속성</h2><button class="plain pmenu" aria-label="패널 메뉴"><svg class="i10"><use href="#ham"/></svg></button></div>
      </section>
    </aside>
  </main>

  <section class="layers" aria-label="레이어">
    <div class="ptabs"><h2 class="ptab">레이어</h2><div class="lmenu"><svg width="9" height="9" viewBox="0 0 9 9"><path class="ln" stroke-width="1.200" d="M1 1.500l3 3-3 3M5 1.500l3 3-3 3"/></svg><i></i><button class="plain" aria-label="패널 메뉴"><svg class="i10"><use href="#ham"/></svg></button></div></div>
    <div class="lsearch"><div class="sbox"><svg width="14" height="14"><use href="#search"/></svg><input type="text" placeholder="모두 검색" aria-label="모두 검색"></div><button class="plain" aria-label="필터"><svg width="12" height="12"><use href="#filter"/></svg></button></div>
    <ul class="llist">
      <li><span class="c"></span><span class="c"><svg width="9" height="11"><use href="#lock"/></svg></span><i class="lc red"></i><svg class="i10"><use href="#chevr"/></svg><span class="th"></span><b>레이어 2</b><span class="tg"><i></i></span></li>
      <li class="sel"><span class="c"><svg width="12" height="9"><use href="#eye"/></svg></span><span class="c"></span><i class="lc blue"></i><svg class="i10"><use href="#chevr"/></svg><span class="th"><svg width="12" height="12" viewBox="0 0 12 12"><path fill="#bba" d="M0 2h4v4H0z"/><path fill="#5d2a4c" d="M8 1h4v3H8zM0 7h5v3H0z"/></svg></span><b>레이어 1</b><span class="tg"><i></i></span></li>
    </ul>
    <div class="lfoot"><span>2 레이어</span><svg><use href="#lf1"/></svg><svg><use href="#lf2"/></svg><svg class="dim"><use href="#search"/></svg><svg><use href="#lf4"/></svg><svg><use href="#lf5"/></svg><svg><use href="#lf6"/></svg><svg><use href="#lf7"/></svg></div>
    <div class="lend"><div class="grip"></div></div>
  </section>

  <section class="dialog" role="dialog" aria-labelledby="dlg-title">
    <h1 id="dlg-title">환경 설정</h1>
    <div class="dmain">
      <ul class="cats">
        <li>일반</li><li>선택 및 고정점 표시</li><li>문자</li><li>단위</li><li>안내선과 격자</li><li>스마트 가이드</li><li>분할 영역</li><li>하이픈 연결</li><li>플러그 인과 스크래치 디스크</li><li class="sel">사용자 인터페이스</li><li>성능</li><li>파일 처리</li><li>클립보드 처리</li><li>검정색 모양</li><li>장치</li>
      </ul>
      <div class="prefs">
        <h2>사용자 인터페이스</h2>
        <div class="prow bright"><span class="pl">밝기(B):</span><div class="swatches"><button class="b1 sel" aria-label="어둡게"></button><button class="b2" aria-label="중간 어둡게"></button><button class="b3" aria-label="중간 밝게"></button><button class="b4" aria-label="밝게"></button></div></div>
        <div class="prow"><span class="pl left">캔버스 색상:</span><div class="radios"><label><input type="radio" name="canvas" checked>명도 일치(M)</label><label><input type="radio" name="canvas">흰색(W)</label></div></div>
        <div class="prow"><span class="pl left">공유 버튼:</span><div class="radios"><label><input type="radio" name="share">명도 일치(M)</label><label><input type="radio" name="share" checked>파랑(B)</label></div></div>
        <hr>
        <div class="checks"><label><input type="checkbox">아이콘 패널 자동 축소(A)</label><label><input type="checkbox" checked>문서를 탭으로 열기(O)</label><label><input type="checkbox" checked>큰 탭(L)</label></div>
        <hr>
        <div class="scaling">
          <div class="sc-left">
            <div class="sc-row"><label for="uis">UI 크기 조절:</label><div class="slider"><input id="uis" type="range" min="0" max="2" value="0"><div class="ends"><span>소</span><span>대</span></div></div></div>
            <div class="info"><svg width="14" height="14" viewBox="0 0 14 14"><circle class="ln" cx="7" cy="7" r="5.800" stroke-width="1.200"/><path d="M6 3h2v2H6zM5.500 6H8v4h1v1H5v-1h1V7h-.5z"/></svg><p>도구, 텍스트 및 기타 UI 요소의 크기를 비례<br>적으로 변경합니다. 현재 화면 해상도에 맞<br>게 크기가 조정됩니다.</p></div>
            <label class="cursor"><input type="checkbox" checked>커서 크기 비례적으로 조절</label>
          </div>
          <div class="sc-right">
            <span>미리 보기</span>
            <div class="preview">
              <div class="pv-tools"><div class="strip"><svg width="7" height="5"><use href="#dl"/></svg></div><div class="grip"></div>
                <div class="toolgrid"><button class="on" aria-label="선택"><svg><use href="#arrow-o"/></svg></button><button class="more" aria-label="직접 선택"><svg><use href="#arrow-f"/></svg></button><button aria-label="마술봉"><svg><use href="#wand"/></svg></button><button aria-label="올가미"><svg><use href="#lasso-o"/></svg></button><button class="more g" aria-label="펜"><svg><use href="#pen"/></svg></button><button class="g" aria-label="곡률"><svg><use href="#curve"/></svg></button><button class="more" aria-label="문자"><svg><use href="#type"/></svg></button><button class="more" aria-label="선"><svg viewBox="0 0 20 20"><path class="ln" stroke-width="1.300" d="M4 16L16 4"/></svg></button></div></div>
              <div class="pv-doc"><div class="pv-tab"><svg class="x" viewBox="0 0 8 8"><path class="ln" stroke-width="1.500" d="M1.500 1.500l5 5M6.500 1.500l-5 5"/></svg><span>Adobe.ai @ 70% (RGB/</span></div><div class="pv-canvas"><div class="pv-art"></div></div></div>
            </div>
          </div>
        </div>
        <div class="prow scroll"><span class="pl">스크롤 단추:</span><div class="radios"><label><input type="radio" name="scroll" checked>두 끝에서(E)</label><label><input type="radio" name="scroll">함께(T)</label></div></div>
      </div>
    </div>
    <div class="dbtns"><button class="ok">확인</button><button>취소</button></div>
  </section>

  <div class="activate"><p class="a1">Windows 정품 인증</p><p class="a2">[설정]으로 이동하여 Windows를 정품 인증합니다.</p></div>
</div>
</body>
</html>
```
FILE: styles.css
```css
* { box-sizing: border-box; }
body { margin: 0; background: #323232; color: #bdbdbd; font: 11px/16px "Open Sans", "Noto Sans CJK KR", sans-serif; overflow: hidden; }
h1, h2, h3, p, ul { margin: 0; padding: 0; font-weight: normal; font-size: inherit; }
ul { list-style: none; }
button, input { font: inherit; color: inherit; margin: 0; }
button { padding: 0; border: 0; background: none; }
svg { fill: currentColor; display: block; flex: none; }
.ln { fill: none; stroke: currentColor; }
.sprite { position: absolute; width: 0; height: 0; }
.i10 { width: 10px; height: 10px; }
.i18 { width: 18px; height: 18px; }
.x { width: 8px; height: 8px; }
.plain { display: flex; align-items: center; }
.dim { color: #5c5c5c; }
.vsep { width: 1px; height: 16px; background: #3f3f3f; }
.app { position: relative; display: flex; flex-direction: column; height: 100vh; }

/* menu bar */
.menubar { display: flex; align-items: center; height: 26px; border-bottom: 1px solid #282828; padding: 0 0 1px 8px; color: #c8c8c8; flex: none; }
.logo { width: 14px; height: 14px; border-radius: 3px; background: #2e0500; color: #f79500; font-size: 8px; line-height: 14px; font-weight: bold; text-align: center; }
.home { margin-left: 11px; color: #bbb; }
.menus { display: flex; gap: 11px; margin-left: 10px; padding: 0 11px 0 12px; border: solid #3c3c3c; border-width: 0 1px; }
.menu-right { display: flex; align-items: center; margin-left: auto; color: #b4b4b4; }
.share { width: 37px; height: 21px; border-radius: 11px; background: #1473e6; color: #fff; font-size: 10px; line-height: 20px; }
.find { margin: 0 9px 0 8px; }
.ws { margin-left: 17px; }
.arrange { margin-left: 13px; }
.winctl { display: flex; align-self: flex-start; margin: 0 0 8px 8px; border: 1px solid #3a3a3a; border-top: 0; height: 16px; }
.winctl .plain { width: 23px; justify-content: center; }

/* control bar */
.control { display: flex; align-items: center; height: 28px; border-bottom: 1px solid #282828; padding-left: 12px; font-size: 9px; flex: none; white-space: nowrap; }
.sel-state { font-size: 10px; width: 73px; color: #9a9a9a; border-right: 1px solid #2a2a2a; }
.combo { display: flex; height: 17px; }
.combo button { width: 15px; background: #282828; border: 1px solid #3a3a3a; display: flex; align-items: center; justify-content: center; }
.combo input { background: #282828; border: 1px solid #3a3a3a; padding: 0 2px; width: 37px; min-width: 0; }
.control .combo { margin-left: 5px; }
.control .c-fill { margin-left: 6px; }
.sw { width: 17px; border: 1px solid #999; }
.none { background: linear-gradient(to bottom right, #fff 45%, #f02020 45% 55%, #fff 55%); }
.plum { background: #69405a; display: grid; place-items: center; }
.plum i { width: 7px; height: 7px; border: 1px solid #ccc; background: #69405a; box-shadow: inset 0 0 0 1px #69405a, inset 0 0 0 3px #fff; }
.light { background: #e2e2e2; }
.dotted { border-bottom: 1px dotted #aaa; line-height: 12px; margin-left: 10px; }
.dotted.near { margin-left: 7px; }
.white { background: #e3e3e3; color: #222; display: flex; align-items: center; gap: 5px; padding: 0 3px 0 6px; }
.c-profile .white { width: 75px; }
.bar { width: 45px; height: 3px; background: #000; flex: none; }
.c-brush .white { width: 73px; gap: 11px; }
.dot { width: 4px; height: 4px; border-radius: 2px; background: #000; }
.control .c-opac input { width: 44px; }
.lbl { margin-left: 5px; }
.control .vsep { margin: 0 3px 0 5px; height: 20px; background: #2a2a2a; }
.boxbtn { width: 55px; height: 17px; border: 1px solid #4a4a4a; border-radius: 2px; line-height: 14px; margin-right: 3px; color: #ccc; }
.similar { margin-left: 5px; gap: 3px; }
.control-right { display: flex; align-items: center; margin-left: auto; padding-right: 11px; }
.control-right svg { margin-left: 5px; }
.control-right svg + svg { margin-left: 11px; }
.control-right svg + svg.i10 { margin-left: 4px; }
.list { margin-left: 9px; }

/* work area */
.work { display: flex; flex: 1; min-height: 0; background: #262626; gap: 2px; }
.strip { height: 11px; background: #262626; display: flex; align-items: center; padding: 0 5px; color: #aaa; flex: none; }
.strip.end { justify-content: flex-end; }
.grip { width: 17px; height: 3px; margin: 3px auto; background: repeating-linear-gradient(90deg, #222 0 1px, #303030 1px 2px); }
.tools { width: 59px; background: #323232; border-right: 1px solid #282828; color: #b4b4b4; flex: none; }
.toolgrid { display: grid; grid-template-columns: 25px 25px; grid-auto-rows: 20px; padding-left: 5px; }
.tools .toolgrid { padding-top: 7px; }
.toolgrid button { position: relative; display: flex; align-items: center; justify-content: center; }
.toolgrid svg { width: 18px; height: 18px; }
.toolgrid .on { background: #1e1e1e; height: 18px; margin: 1px 1px 0 0; border-radius: 2px; }
.more::after { content: ""; position: absolute; right: 0; bottom: 2px; width: 3px; height: 3px; background: linear-gradient(to bottom right, transparent 45%, #b4b4b4 50%); }
.fillstroke { position: relative; height: 48px; margin: 3px 5px 0; border-top: 1px solid #2a2a2a; }
.fs-fill, .fs-stroke, .fs-swap, .fs-def { position: absolute; }
.fs-fill { left: 0; top: 4px; width: 29px; height: 29px; border: 1px solid #aaa; background: linear-gradient(to bottom right, #fff 47%, #f02020 47% 53%, #fff 53%); }
.fs-stroke { left: 15px; top: 18px; width: 30px; height: 30px; border: 1px solid #bbb; background: #323232; box-shadow: inset 0 0 0 6px #69405a, inset 0 0 0 7px #bbb; }
.fs-swap { left: 36px; top: 3px; }
.fs-def { left: 0; top: 37px; }
.modes { display: flex; margin: 7px 4px 0 5px; gap: 1px; }
.modes button { width: 16px; height: 15px; border: 1px solid #2a2a2a; display: flex; align-items: center; justify-content: center; }
.modes .on { background: #1e1e1e; }
.modes .off { color: #555; }
.modes.draw { margin-top: 5px; }
.m-color { width: 9px; height: 9px; border: 1px solid #8a5478; }
.m-none { width: 10px; height: 10px; background: linear-gradient(to bottom right, #fff 38%, #f01818 38% 62%, #fff 62%); }
.screenb { margin: 6px auto 0; }
.dots { margin: 16px auto 0; }
.tools-end { margin-top: 10px; height: 2px; background: #282828; }

.doc { flex: 1; min-width: 0; display: flex; flex-direction: column; }
.tabs { display: flex; height: 25px; border-bottom: 1px solid #2a2a2a; flex: none; }
.tab { display: flex; align-items: center; justify-content: space-between; gap: 12px; padding: 0 4px 2px 8px; color: #7c7c7c; border-right: 1px solid #2e2e2e; }
.tab.active { background: #323232; color: #c4c4c4; }
.canvas { flex: 1; background: #383838; display: flex; justify-content: flex-end; }
.vscroll { width: 14px; background: #2b2b2b; display: flex; align-items: flex-end; justify-content: center; padding-bottom: 4px; color: #888; }
.status { height: 15px; border-bottom: 2px solid #262626; background: #323232; display: flex; align-items: center; font-size: 9px; overflow: hidden; padding-left: 2px; flex: none; }
.status .combo { height: 15px; margin-right: 3px; }
.status .s-zoom input { width: 43px; }
.status .s-page input { width: 34px; }
.nav { width: 15px; justify-content: center; color: #c0c0c0; margin-left: 1px; }
.s-tool { flex: none; width: 166px; text-align: center; margin-left: 2px; border: solid #2b2b2b; border-width: 0 1px; }
.hscroll { flex: 1; height: 100%; background: #2b2b2b; display: flex; align-items: center; justify-content: space-between; color: #888; padding: 0 2px; }
.flip { transform: rotate(180deg); }
.thumb { width: 21px; height: 11px; border-radius: 6px; background: #494949; margin-left: 48px; }
.corner { width: 14px; }

/* icon dock */
.dock { width: 32px; background: #323232; flex: none; color: #b4b4b4; }
.dgroup { border-bottom: 2px solid #272727; padding: 1px 4px 3px; }
.dgroup button { display: flex; width: 24px; height: 19px; margin-bottom: 5px; align-items: center; justify-content: center; }
.dgroup button:last-child { margin-bottom: 0; }
.dgroup svg { width: 18px; height: 18px; }
.dgroup .on { background: #1e1e1e; border-radius: 2px; }

/* right panels */
.panels { width: 207px; background: #262626; display: flex; flex-direction: column; flex: none; }
.panel { background: #323232; margin-bottom: 2px; }
.panel.rest { flex: 1; margin: 0; }
.ptabs { display: flex; background: #262626; height: 23px; }
.ptab { background: #323232; padding: 0 7px 3px 8px; font-weight: bold; color: #c4c4c4; display: flex; align-items: center; gap: 4px; height: 23px; }
.ptab.off { background: none; color: #777; font-weight: normal; padding-left: 6px; }
.updown { margin-left: -5px; color: #888; }
.pmenu { margin-left: auto; padding-right: 2px; color: #777; }
.pbody { padding: 4px 2px 0 4px; font-size: 9px; }
.panel h3 { color: #a4a4a4; line-height: 16px; }
.irow { display: flex; align-items: center; height: 26px; color: #b4b4b4; padding-left: 1px; }
.irow svg { width: 16px; height: 16px; }
.irow button { width: 20px; height: 20px; display: flex; align-items: center; justify-content: center; }
.six { gap: 10px; }
.six .skip { margin-left: 28px; }
hr { border: 0; border-top: 1px solid #2a2a2a; margin: 4px 0 3px; height: 0; width: 100%; }
.split { display: flex; height: 45px; }
.half { width: 113px; }
.half.to { padding-left: 13px; flex: 1; border-left: 1px solid #2a2a2a; }
.half .irow { gap: 6px; }
.half.to .irow { padding-left: 0; }
.irow .on { background: #1e1e1e; border-radius: 2px; }
.mm { display: flex; align-items: center; width: 49px; height: 17px; background: #393939; color: #555; padding-left: 3px; margin-left: 2px; }
.mm svg { width: 10px; height: 13px; }
.mm input { width: 34px; border: 0; background: none; color: #555; padding: 0 0 0 4px; }
.pfrow { gap: 11px; height: 28px; }
.pfrow.second { padding-left: 3px; }
.irow.pfrow svg { width: 14px; height: 14px; }
.irow .expand { width: 59px; height: 16px; background: #393939; color: #5c5c5c; }
.pf .pbody { padding-bottom: 1px; }

/* layers panel */
.layers { position: absolute; left: 1239px; top: 63px; width: 230px; background: #323232; border: 1px solid #202020; color: #bbb; }
.layers .ptab { padding: 1px 8px 3px 9px; font-weight: normal; }
.lmenu { margin-left: auto; display: flex; align-items: center; gap: 5px; color: #888; padding-right: 4px; }
.lmenu i { width: 1px; height: 10px; background: #888; }
.lsearch { display: flex; align-items: center; gap: 8px; height: 31px; margin: 5px 4px 0; border: 1px solid #2c2c2c; padding: 0 4px 3px 5px; }
.sbox { flex: 1; display: flex; align-items: center; height: 19px; background: #262626; border: 1px solid #3c3c3c; padding: 0 3px; gap: 7px; }
.sbox input { border: 0; background: none; padding: 0; flex: 1; min-width: 0; }
.sbox input::placeholder { color: #636363; }
.llist { margin: 0 4px; height: 333px; border: 1px solid #2c2c2c; border-top: 0; font-size: 9px; }
.llist li { position: relative; display: flex; align-items: center; height: 18px; color: #ccc; }
.llist .sel { background: #384e62; }
.llist .sel::after { content: ""; position: absolute; right: 0; top: 0; width: 6px; height: 6px; background: linear-gradient(to top right, transparent 50%, #bbb 50%); }
.c { width: 17px; height: 18px; border-right: 1px solid #2c2c2c; display: flex; align-items: center; justify-content: center; }
.sel .c { border-color: #33475a; }
.lc { width: 3px; height: 16px; margin: 0 4px 0 3px; }
.red { background: #f0504e; }
.blue { background: #4f80ff; }
.th { width: 14px; height: 14px; border: 1px solid #222; background: #fff; margin: 0 5px 0 8px; }
.tg { margin-left: auto; width: 30px; height: 18px; border-left: 1px solid #2c2c2c; display: flex; align-items: center; padding-left: 5px; }
.tg i { width: 7px; height: 7px; border: 1px solid #ccc; border-radius: 4px; }
.lfoot { display: flex; align-items: center; gap: 8px; height: 18px; padding: 0 22px 0 4px; font-size: 9px; }
.lfoot span { margin-right: auto; }
.lfoot svg { width: 13px; height: 13px; }
.lend { border-top: 2px solid #252525; height: 6px; display: flex; }
.lend .grip { margin-top: 1px; }

/* preferences dialog */
.dialog { position: absolute; left: 448px; top: 88px; width: 678px; background: #323232; box-shadow: 0 2px 10px rgba(0, 0, 0, .4); padding-bottom: 26px; }
.dialog h1 { height: 25px; background: #fff; color: #222; padding-left: 7px; line-height: 25px; }
.dmain { display: flex; padding: 18px 25px 0 13px; color: #c0c0c0; }
.cats { width: 141px; height: 508px; border: 1px solid #3b3b3b; padding: 2px 1px 253px; flex: none; display: flex; flex-direction: column; }
.cats li { flex: 1; padding-left: 4px; line-height: 16px; white-space: nowrap; min-height: 0; }
.cats .sel { background: #384e62; }
.prefs { flex: 1; padding-left: 17px; min-width: 0; }
.prefs h2 { color: #8f8f8f; line-height: 17px; border-bottom: 1px solid #2a2a2a; }
.prefs label { display: flex; align-items: center; }
.prow { display: flex; color: #c0c0c0; }
.pl { width: 56px; color: #8f8f8f; text-align: right; white-space: nowrap; margin-top: 4px; }
.pl.left { text-align: left; }
.bright { padding-top: 12px; height: 43px; }
.bright .pl { margin-top: 9px; }
.swatches { display: flex; align-items: center; gap: 5px; margin-left: 8px; height: 28px; }
.swatches button { width: 22px; height: 22px; border: 1px solid #aaa; }
.swatches .sel { box-shadow: 0 0 0 1px #222, 0 0 0 3px #378ef0; margin: 0 1px 0 3px; }
.b1 { background: #323232; }
.b2 { background: #535353; }
.b3 { background: #b8b8b8; }
.b4 { background: #f0f0f0; }
.radios { margin-left: 9px; }
.radios label { height: 21px; gap: 4px; }
input[type=radio], input[type=checkbox] { appearance: none; flex: none; width: 11px; height: 11px; border: 1px solid #8c8c8c; }
input[type=radio] { border-radius: 50%; }
input[type=radio]:checked { background: radial-gradient(#323232 0 1px, #a4a4a4 2px); border-color: #a4a4a4; }
input[type=checkbox] { border-radius: 2px; }
input[type=checkbox]:checked { border-color: #a4a4a4; background: #a4a4a4; display: grid; place-items: center; }
input[type=checkbox]:checked::after { content: ""; width: 4px; height: 7px; border: solid #2c2c2c; border-width: 0 2px 2px 0; transform: rotate(45deg); margin-bottom: 2px; }
.prefs hr { margin: 9px 0 6px; }
.checks label { height: 25px; gap: 4px; }
.checks + hr { margin: 8px 0 11px; }
.scaling { display: flex; height: 147px; }
.sc-left { width: 238px; }
.sc-row { display: flex; height: 34px; color: #8f8f8f; }
.sc-row > label { width: 61px; align-items: flex-start; padding-top: 2px; white-space: nowrap; }
.slider { width: 152px; }
#uis { appearance: none; display: block; width: 100%; height: 13px; background: linear-gradient(#5c5c5c, #5c5c5c) no-repeat 8px 6px / 143px 2px, linear-gradient(#5c5c5c, #5c5c5c) no-repeat 75px 2px / 1px 9px, linear-gradient(#5c5c5c, #5c5c5c) no-repeat 147px 2px / 1px 9px; }
#uis::-webkit-slider-thumb { appearance: none; width: 11px; height: 11px; border: 2px solid #b0b0b0; border-radius: 50%; background: #323232; }
.ends { display: flex; justify-content: space-between; font-size: 9px; line-height: 12px; padding: 0 1px; }
.info { display: flex; gap: 8px; padding-left: 12px; color: #a4a4a4; }
.info p { font-size: 9px; line-height: 10px; white-space: nowrap; padding-top: 1px; color: #989898; }
.cursor { gap: 4px; padding: 8px 0 0 13px; }
.sc-right > span { display: block; line-height: 20px; color: #8f8f8f; }
.preview { display: flex; width: 177px; height: 106px; margin-top: 14px; overflow: hidden; background: #292929; gap: 3px; color: #b4b4b4; }
.pv-tools { width: 60px; background: #323232; }
.preview .toolgrid { padding: 3px 0 0 6px; grid-template-rows: 21px 20px 24px 20px; }
.preview .g { border-top: 1px solid #2a2a2a; }
.pv-tools .grip { margin-bottom: 4px; }
.pv-doc { flex: 1; display: flex; flex-direction: column; min-width: 0; }
.pv-tab { height: 26px; background: #323232; border-bottom: 1px solid #292929; display: flex; align-items: center; gap: 6px; padding-left: 5px; color: #e2e2e2; font-size: 9px; font-weight: 600; white-space: nowrap; }
.pv-canvas { flex: 1; background: #383838; padding: 17px 0 0 32px; }
.pv-art { height: 100%; background: #fff; }
.scroll .radios { margin-left: 3px; }
.scroll .radios label { height: 23px; }
.dbtns { display: flex; justify-content: flex-end; gap: 5px; padding: 18px 12px 0 0; }
.dbtns button { width: 77px; height: 22px; border: 1px solid #9a9a9a; border-radius: 11px; line-height: 18px; }
.dbtns .ok { border: 2px solid #b8b8b8; line-height: 16px; }

.activate { position: absolute; left: 1374px; top: 845px; color: #808080; }
.a1 { font-size: 17px; line-height: 24px; }
.a2 { font-size: 13px; line-height: 16px; }
```
